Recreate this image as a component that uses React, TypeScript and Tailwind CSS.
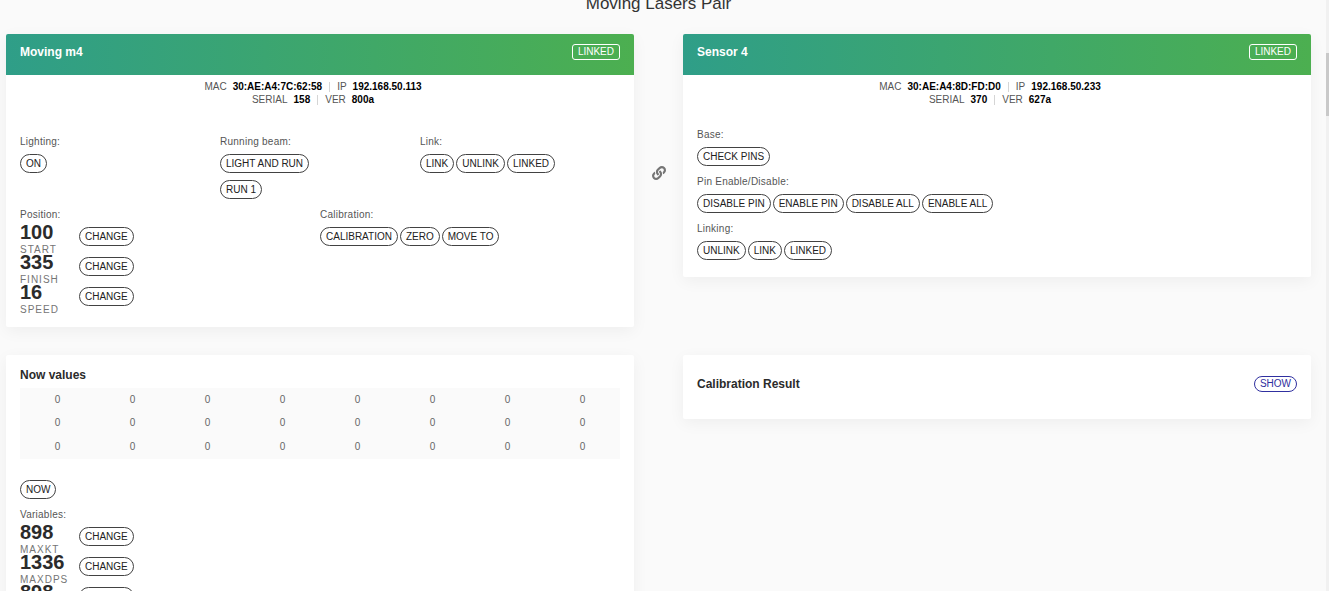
import { ReactNode } from "react";
import { FaLink } from "react-icons/fa";

const nowValues = [
  [0, 0, 0, 0, 0, 0, 0, 0],
  [0, 0, 0, 0, 0, 0, 0, 0],
  [0, 0, 0, 0, 0, 0, 0, 0],
];

function PillButton({ children }: { children: ReactNode }) {
  return (
    <button
      type="button"
      className="h-[19px] shrink-0 rounded-full border border-[#424242] px-[5px] text-[10px] leading-[17px] text-[#212121]"
    >
      {children}
    </button>
  );
}

function ButtonGroup({ label, buttons }: { label: string; buttons: string[] }) {
  return (
    <div>
      <Label>{label}</Label>
      <div className="mt-[5px] flex flex-wrap gap-[2px]">
        {buttons.map((name) => (
          <PillButton key={name}>{name}</PillButton>
        ))}
      </div>
    </div>
  );
}

function Label({ children }: { children: ReactNode }) {
  return (
    <p className="text-[10px] leading-[14px] tracking-wide text-[#555555]">
      {children}
    </p>
  );
}

function Setting({ value, name }: { value: number; name?: string }) {
  return (
    <div className="flex h-[30px]">
      <div className="w-[59px] pt-[2px]">
        <p className="text-xl leading-4 font-bold text-[#2b2b2b]">{value}</p>
        <p className="mt-[5px] text-[10px] leading-[10px] tracking-widest text-[#757575]">
          {name}
        </p>
      </div>
      <div className="flex items-center pb-[2px]">
        <PillButton>CHANGE</PillButton>
      </div>
    </div>
  );
}

function CardHeader({ title }: { title: string }) {
  return (
    <header className="flex h-[41px] items-center justify-between rounded-t-[2px] bg-[linear-gradient(to_right,#2f9e88,#4caf50)] px-[14px] pb-[5px] text-white">
      <h2 className="text-xs leading-[14px] font-bold">{title}</h2>
      <span className="h-4 rounded-[3px] border border-white px-[5px] text-[10px] leading-[14px]">
        LINKED
      </span>
    </header>
  );
}

function InfoLine({ items }: { items: [string, string][] }) {
  return (
    <dl className="flex justify-center pr-[14px] text-[10px] leading-[13px]">
      {items.map(([key, value], i) => (
        <div key={key} className="flex items-center">
          {i > 0 && <span className="mx-[7px] h-[10px] w-px bg-[#d5d5d5]" />}
          <dt className="text-[#555555]">{key}</dt>
          <dd className="ml-[6px] font-bold text-black">{value}</dd>
        </div>
      ))}
    </dl>
  );
}

function Card({ children }: { children: ReactNode }) {
  return (
    <section className="min-w-0 flex-1 rounded-[2px] bg-white shadow-[0_4px_16px_rgba(0,0,0,0.05)]">
      {children}
    </section>
  );
}

function App() {
  return (
    <div className="flex h-screen overflow-hidden bg-[#fafafa] font-['Liberation_Sans',Arial,sans-serif]">
      <main className="min-w-0 flex-1 pr-[15px] pl-[6px]">
        <h1 className="-mt-[7px] text-center text-[17px] leading-[21px] text-[#333333]">
          Moving Lasers Pair
        </h1>

        <div className="mt-5 flex items-start">
          <Card>
            <CardHeader title="Moving m4" />
            <div className="px-[14px] pt-[5px] pb-[15px]">
              <InfoLine
                items={[
                  ["MAC", "30:AE:A4:7C:62:58"],
                  ["IP", "192.168.50.113"],
                ]}
              />
              <InfoLine
                items={[
                  ["SERIAL", "158"],
                  ["VER", "800a"],
                ]}
              />
              <div className="mt-[29px] grid grid-cols-3">
                <ButtonGroup label="Lighting:" buttons={["ON"]} />
                <div>
                  <ButtonGroup
                    label="Running beam:"
                    buttons={["LIGHT AND RUN"]}
                  />
                  <div className="mt-[7px] flex">
                    <PillButton>RUN 1</PillButton>
                  </div>
                </div>
                <ButtonGroup
                  label="Link:"
                  buttons={["LINK", "UNLINK", "LINKED"]}
                />
              </div>
              <div className="mt-[9px] grid grid-cols-2">
                <div>
                  <Label>Position:</Label>
                  <Setting value={100} name="START" />
                  <Setting value={335} name="FINISH" />
                  <Setting value={16} name="SPEED" />
                </div>
                <ButtonGroup
                  label="Calibration:"
                  buttons={["CALIBRATION", "ZERO", "MOVE TO"]}
                />
              </div>
            </div>
          </Card>

          <div className="flex w-[49px] shrink-0 justify-center pt-[132px]">
            <FaLink className="size-[14px] text-[#757575]" />
          </div>

          <Card>
            <CardHeader title="Sensor 4" />
            <div className="px-[14px] pt-[5px] pb-[17px]">
              <InfoLine
                items={[
                  ["MAC", "30:AE:A4:8D:FD:D0"],
                  ["IP", "192.168.50.233"],
                ]}
              />
              <InfoLine
                items={[
                  ["SERIAL", "370"],
                  ["VER", "627a"],
                ]}
              />
              <div className="mt-[22px] flex flex-col gap-[9px]">
                <ButtonGroup label="Base:" buttons={["CHECK PINS"]} />
                <ButtonGroup
                  label="Pin Enable/Disable:"
                  buttons={[
                    "DISABLE PIN",
                    "ENABLE PIN",
                    "DISABLE ALL",
                    "ENABLE ALL",
                  ]}
                />
                <ButtonGroup
                  label="Linking:"
                  buttons={["UNLINK", "LINK", "LINKED"]}
                />
              </div>
            </div>
          </Card>
        </div>

        <div className="mt-7 flex items-start gap-[49px]">
          <Card>
            <div className="px-[14px] pt-[13px] pb-[15px]">
              <h2 className="text-xs leading-[14px] font-bold text-[#2b2b2b]">
                Now values
              </h2>
              <table className="mt-[6px] h-[71px] w-full table-fixed bg-[#fafafa] text-center text-[10px] leading-[14px] text-[#666666]">
                <tbody>
                  {nowValues.map((row, i) => (
                    <tr key={i}>
                      {row.map((value, j) => (
                        <td key={j}>{value}</td>
                      ))}
                    </tr>
                  ))}
                </tbody>
              </table>
              <div className="mt-[21px] mb-[9px] flex">
                <PillButton>NOW</PillButton>
              </div>
              <Label>Variables:</Label>
              <Setting value={898} name="MAXKT" />
              <Setting value={1336} name="MAXDPS" />
              <Setting value={898} />
            </div>
          </Card>
          <Card>
            <div className="flex h-16 items-center justify-between px-[14px] pb-[6px]">
              <h2 className="text-xs leading-[14px] font-bold text-[#2b2b2b]">
                Calibration Result
              </h2>
              <button
                type="button"
                className="h-4 rounded-full border border-[#3030a0] px-[5px] text-[10px] leading-[14px] text-[#3030a0]"
              >
                SHOW
              </button>
            </div>
          </Card>
        </div>
      </main>

      {/* scroll track */}
      <div className="w-[3px] shrink-0 bg-[#f1f1f1] pt-[53px]">
        <div className="h-[63px] bg-[#c9c9c9]" />
      </div>
    </div>
  );
}

export default App;
